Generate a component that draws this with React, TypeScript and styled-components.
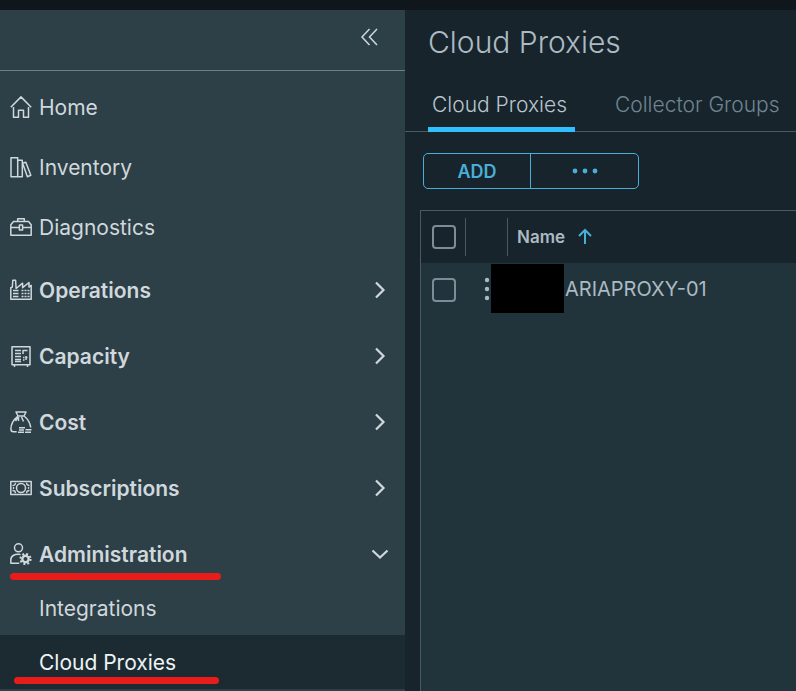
import React, { ReactNode, useState } from "react";
import styled, { createGlobalStyle, css } from "styled-components";

const color = {
  top: "#0f161c",
  side: "#2d3f47",
  sideActive: "#1c2b32",
  main: "#18242b",
  body: "#22343b",
  line: "#4a5a64",
  text: "#cfd8dc",
  heading: "#acbac3",
  muted: "#6f8593",
  action: "#49aeda",
  tab: "#30bfff",
  mark: "#e81c1a",
};

const GlobalStyle = createGlobalStyle`
  *, *::before, *::after { box-sizing: border-box; }
  body {
    margin: 0;
    background: ${color.main};
    color: ${color.text};
    font-family: Inter, "Liberation Sans", sans-serif;
    font-size: 21px;
    overflow: hidden;
  }
  button { font: inherit; color: inherit; background: none; border: 0; padding: 0; cursor: pointer; }
  a { color: inherit; text-decoration: none; }
  ul { list-style: none; margin: 0; padding: 0; }
`;

const Shell = styled.div`
  display: flex;
  flex-direction: column;
  height: 100vh;
`;
const TopBar = styled.header`
  flex: none;
  height: 10px;
  background: ${color.top};
`;
const Columns = styled.div`
  display: flex;
  flex: 1;
  min-height: 0;
`;
const Sidebar = styled.nav`
  flex: 0 1 405px;
  background: ${color.side};
  overflow: hidden;
`;
const SidebarHeader = styled.div`
  display: flex;
  align-items: center;
  justify-content: flex-end;
  height: 61px;
  padding: 0 24px 6px;
  border-bottom: 1px solid #6a7f87;
`;
const CollapseButton = styled.button`
  display: flex;
`;
const NavList = styled.ul`
  padding-top: 6px;
`;
const rowBase = css`
  display: flex;
  align-items: center;
  gap: 7px;
  width: 100%;
  padding: 0 14px 0 10px;
  text-align: left;
`;
const NavLink = styled.a`
  ${rowBase}
  height: 60px;
`;
const Group = styled.li`
  padding-top: 6px;
`;
const GroupButton = styled.button<{ $open: boolean }>`
  ${rowBase}
  height: 54px;
  margin-bottom: ${(p) => (p.$open ? 0 : 6)}px;
  font-weight: 600;
`;
const Label = styled.span`
  flex: 1;
`;
const Marked = styled.div<{ $left: number; $width: number; $top: number }>`
  position: relative;
  &::after {
    content: "";
    position: absolute;
    left: ${(p) => p.$left}px;
    top: ${(p) => p.$top}px;
    width: ${(p) => p.$width}px;
    height: 7px;
    border-radius: 4px;
    background: ${color.mark};
    pointer-events: none;
  }
`;
const ChildLink = styled.a<{ $active?: boolean }>`
  display: flex;
  align-items: center;
  height: 54px;
  padding-left: 39px;
  background: ${(p) => (p.$active ? color.sideActive : "transparent")};
  color: ${(p) => (p.$active ? "#eef3f5" : color.text)};
`;
const Svg = styled.svg`
  display: block;
  flex: none;
  fill: none;
  stroke: currentColor;
`;

const Main = styled.main`
  flex: 1 1 0;
  min-width: 0;
  display: flex;
  flex-direction: column;
`;
const Title = styled.h1`
  margin: 0;
  padding: 14px 23px 0;
  font-size: 30px;
  line-height: 36px;
  font-weight: 300;
  color: ${color.heading};
`;
const Tabs = styled.div`
  display: flex;
  gap: 36px;
  height: 72px;
  padding: 20px 0 0 23px;
  border-bottom: 1px solid ${color.line};
  white-space: nowrap;
`;
const Tab = styled.button<{ $active?: boolean }>`
  flex: none;
  height: 52px;
  padding: 2px 8px 0 4px;
  border-bottom: 5px solid ${(p) => (p.$active ? color.tab : "transparent")};
  color: ${(p) => (p.$active ? "#b9c6cf" : color.muted)};
  font-weight: 300;
`;
const ButtonGroup = styled.div`
  display: flex;
  align-self: flex-start;
  margin: 21px 0 0 18px;
  border: 1px solid ${color.action};
  border-radius: 5px;
  color: ${color.action};
`;
const ActionButton = styled.button`
  display: flex;
  align-items: center;
  justify-content: center;
  width: 107px;
  height: 34px;
  font-size: 18px;
  font-weight: 600;
  &:not(:last-child) { border-right: 1px solid ${color.action}; }
`;
const Grid = styled.section`
  flex: 1;
  margin: 21px 0 0 15px;
  border: solid ${color.line};
  border-width: 1px 0 0 1px;
  background: ${color.body};
`;
const Table = styled.table`
  width: 100%;
  table-layout: fixed;
  border-collapse: collapse;
  font-size: 20px;
  font-weight: 400;
`;
const Th = styled.th<{ $width?: number }>`
  width: ${(p) => (p.$width ? `${p.$width}px` : "auto")};
  height: 52px;
  padding: 0;
  background: ${color.main};
  text-align: left;
`;
const HeadCell = styled.div<{ $divided?: boolean }>`
  display: flex;
  align-items: center;
  gap: 12px;
  height: 38px;
  padding-left: ${(p) => (p.$divided ? 11 : 9)}px;
  border-right: ${(p) => (p.$divided ? `1px solid ${color.line}` : "0")};
  color: ${color.heading};
  font-size: 17px;
  font-weight: 600;
`;
const Td = styled.td`
  height: 51px;
  padding: 0;
  color: ${color.heading};
`;
const CheckCell = styled.div`
  display: flex;
  padding: 2px 0 0 11px;
`;
const Checkbox = styled.input`
  appearance: none;
  width: 24px;
  height: 24px;
  margin: 0;
  border: 2px solid #7d8d97;
  border-radius: 4px;
  &:checked { background: ${color.action}; }
`;
const MenuButton = styled.button`
  display: flex;
  justify-content: center;
  width: 42px;
`;
const NameCell = styled.div`
  display: flex;
  align-items: center;
  height: 51px;
  margin-left: -17px;
  white-space: nowrap;
`;
const Redaction = styled.span`
  flex: none;
  width: 73px;
  height: 49px;
  margin-right: 1px;
  background: #000;
`;

function NavIcon({ children }: { children: ReactNode }) {
  return (
    <Svg width="22" height="22" viewBox="0 0 22 22" strokeWidth="1.5" strokeLinejoin="round" aria-hidden="true">
      {children}
    </Svg>
  );
}

const icons = {
  home: <path d="M.8 11.2 11 .9l10.200 10.300M3.500 11v10.300h5v-7h5v7h5V11" />,
  inventory: <path d="M1 1.700h6.700v19H1zM7.700 4.200h4.600v16.500H7.700zM12.600 7.300l3.200-1 5 13-3.400 1.400z" />,
  diagnostics: (
    <path d="M3.500 5.500h15l2.700 3.200v10.600H.8V8.700zM7.700 5.200V2.700h6.600v2.500M.8 11.400h8M13.200 11.400h8M9.400 9h3.200v5H9.400z" />
  ),
  operations: (
    <>
      <path d="M.8 20.200V8.700l1.500-.6.5-6.900h2.800l.5 8.300 6.500-5.300v4.500l6.400-5.200v4.600l2.200-1.700v13.800z" />
      <path d="M3 11.500h5.500M3 14.500h5.500M3 17.500h5.500M11.500 11.500h8M11.500 14.500h8M11.500 17.500h8" />
      <path d="M14 10v9M17 10v9" stroke={color.side} strokeWidth="1" />
    </>
  ),
  capacity: (
    <>
      <path d="M2 1.700h18v18H2zM4.500 20v2M17.500 20v2" />
      <path d="M5 5.500h6M5 8.500h6M5 11.500h6M5 14.500h6M5 16.500h6M13 9V5.500h4.500M13 12.500h1.500M16 12.500h1.500M13 15h1.500M16 11v4" />
    </>
  ),
  cost: (
    <>
      <path d="M6 1h10l-2 4H8zM8 5C3 9 .9 14 .9 18c0 2 .8 2.800 2.500 2.800h3.300M14 5c4 3 6 7 6.800 11.500M8.500 6v4M8 6l-2.500 4M11.500 6l2 4.500" />
      <path d="M9 16.700h6M9 19h5M8 21.200h6M15.500 18.700h6M15 21.200h6" />
    </>
  ),
  subscriptions: (
    <>
      <path d="M.8 4.500h20.400v13H.8z" />
      <circle cx="11" cy="11" r="4.500" />
      <path d="M2.500 8.500c2 0 3-1 3-2.800M19.500 8.500c-2 0-3-1-3-2.800M2.500 13.500c2 0 3 1 3 2.800M19.500 13.500c-2 0-3 1-3 2.800M3.500 10v2M18.500 10v2" strokeWidth="1.300" />
    </>
  ),
  administration: (
    <>
      <circle cx="8.500" cy="4.800" r="4" />
      <path d="M10.500 11.500C5 10.500.8 12.700.8 17v3.300h8.500" />
      <circle cx="15.500" cy="16" r="3.200" strokeWidth="2.400" />
      <circle cx="15.500" cy="16" r="5.100" strokeWidth="2" strokeDasharray="2.003 2.003" />
    </>
  ),
};

function Chevron({ open }: { open: boolean }) {
  return (
    <Svg width="22" height="22" viewBox="0 0 22 22" strokeWidth="2.200" aria-hidden="true">
      <path d={open ? "M3.500 7.500 11 14.500l7.500-7" : "M7 3.500 14.500 11 7 18.500"} />
    </Svg>
  );
}

const links: { id: keyof typeof icons; label: string }[] = [
  { id: "home", label: "Home" },
  { id: "inventory", label: "Inventory" },
  { id: "diagnostics", label: "Diagnostics" },
];
const groups: { id: keyof typeof icons; label: string }[] = [
  { id: "operations", label: "Operations" },
  { id: "capacity", label: "Capacity" },
  { id: "cost", label: "Cost" },
  { id: "subscriptions", label: "Subscriptions" },
];

export default function App() {
  const [adminOpen, setAdminOpen] = useState(true);
  return (
    <>
      <GlobalStyle />
      <Shell>
        <TopBar />
        <Columns>
          <Sidebar aria-label="Primary">
            <SidebarHeader>
              <CollapseButton aria-label="Collapse navigation">
                <Svg width="24" height="22" viewBox="0 0 24 22" strokeWidth="1.500">
                  <path d="M12.500 3 5 11l7.500 8M20 3l-7.500 8 7.500 8" />
                </Svg>
              </CollapseButton>
            </SidebarHeader>
            <NavList>
              {links.map((l) => (
                <li key={l.id}>
                  <NavLink href="#">
                    <NavIcon>{icons[l.id]}</NavIcon>
                    <Label>{l.label}</Label>
                  </NavLink>
                </li>
              ))}
              {groups.map((g) => (
                <Group key={g.id}>
                  <GroupButton $open={false} aria-expanded={false}>
                    <NavIcon>{icons[g.id]}</NavIcon>
                    <Label>{g.label}</Label>
                    <Chevron open={false} />
                  </GroupButton>
                </Group>
              ))}
              <Group>
                <Marked $left={10} $top={46} $width={211}>
                  <GroupButton $open={adminOpen} aria-expanded={adminOpen} onClick={() => setAdminOpen(!adminOpen)}>
                    <NavIcon>{icons.administration}</NavIcon>
                    <Label>Administration</Label>
                    <Chevron open={adminOpen} />
                  </GroupButton>
                </Marked>
                {adminOpen && (
                  <ul>
                    <li>
                      <ChildLink href="#">Integrations</ChildLink>
                    </li>
                    <li>
                      <Marked $left={14} $top={42} $width={205}>
                        <ChildLink href="#" $active aria-current="page">
                          Cloud Proxies
                        </ChildLink>
                      </Marked>
                    </li>
                  </ul>
                )}
              </Group>
            </NavList>
          </Sidebar>
          <Main>
            <Title>Cloud Proxies</Title>
            <Tabs role="tablist">
              <Tab role="tab" aria-selected="true" $active>
                Cloud Proxies
              </Tab>
              <Tab role="tab" aria-selected="false">
                Collector Groups
              </Tab>
            </Tabs>
            <ButtonGroup>
              <ActionButton>ADD</ActionButton>
              <ActionButton aria-label="More actions">
                <Svg width="26" height="6" viewBox="0 0 26 6">
                  <g fill={color.action} stroke="none">
                    <circle cx="3" cy="3" r="2.400" />
                    <circle cx="13" cy="3" r="2.400" />
                    <circle cx="23" cy="3" r="2.400" />
                  </g>
                </Svg>
              </ActionButton>
            </ButtonGroup>
            <Grid>
              <Table>
                <thead>
                  <tr>
                    <Th $width={45}>
                      <HeadCell $divided>
                        <Checkbox type="checkbox" aria-label="Select all" />
                      </HeadCell>
                    </Th>
                    <Th $width={42} aria-label="Actions">
                      <HeadCell $divided />
                    </Th>
                    <Th aria-sort="ascending">
                      <HeadCell>
                        Name
                        <Svg width="16" height="18" viewBox="0 0 16 18" strokeWidth="2" aria-hidden="true">
                          <path stroke={color.action} d="M8 16V2M2 8l6-6 6 6" />
                        </Svg>
                      </HeadCell>
                    </Th>
                  </tr>
                </thead>
                <tbody>
                  <tr>
                    <Td>
                      <CheckCell>
                        <Checkbox type="checkbox" aria-label="Select ARIAPROXY-01" />
                      </CheckCell>
                    </Td>
                    <Td>
                      <MenuButton aria-label="Row actions">
                        <Svg width="6" height="24" viewBox="0 0 6 24">
                          <g fill={color.heading} stroke="none">
                            <circle cx="3" cy="3" r="2.200" />
                            <circle cx="3" cy="12" r="2.200" />
                            <circle cx="3" cy="21" r="2.200" />
                          </g>
                        </Svg>
                      </MenuButton>
                    </Td>
                    <Td>
                      <NameCell>
                        <Redaction />
                        ARIAPROXY-01
                      </NameCell>
                    </Td>
                  </tr>
                </tbody>
              </Table>
            </Grid>
          </Main>
        </Columns>
      </Shell>
    </>
  );
}
